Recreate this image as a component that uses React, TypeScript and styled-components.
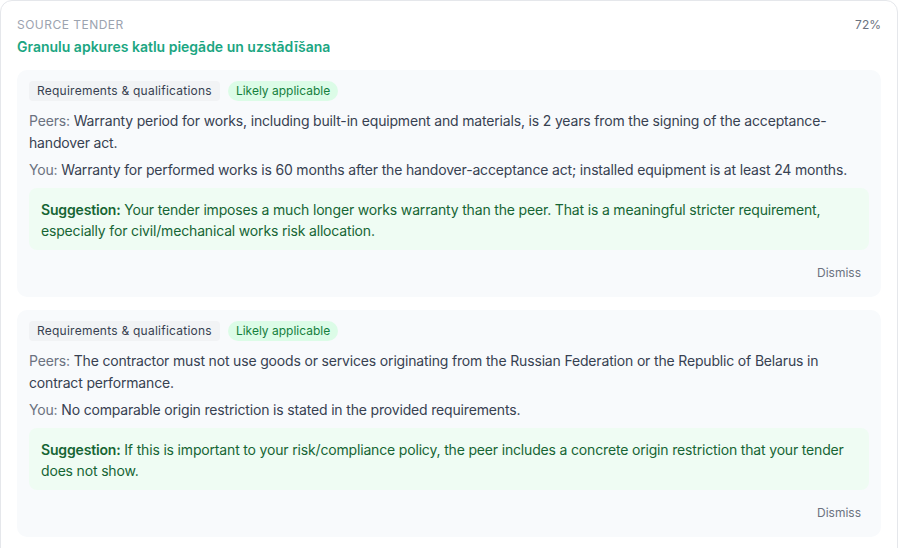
import React from 'react';
import styled, { createGlobalStyle } from 'styled-components';

const GlobalStyle = createGlobalStyle`
  html, body {
    margin: 0;
    padding: 0;
    background: #ffffff;
  }
  body {
    font-family: Inter, 'Noto Sans', sans-serif;
    color: #374151;
    -webkit-font-smoothing: antialiased;
  }
`;

// Styled components
const Panel = styled.div`
  margin-right: 1px;
  border: 1px solid #e5e7eb;
  border-radius: 12px;
  padding: 16px 16px 12px;
  background: #fff;
`;

const Header = styled.div`
  display: flex;
  justify-content: space-between;
  align-items: flex-start;
`;

const Eyebrow = styled.div`
  font-size: 12px;
  line-height: 16px;
  letter-spacing: 0.04em;
  text-transform: uppercase;
  color: #9ca3af;
`;

const Score = styled.div`
  font-size: 12px;
  line-height: 16px;
  color: #6b7280;
`;

const TenderTitle = styled.div`
  margin-top: 4px;
  font-size: 14px;
  line-height: 20px;
  font-weight: 600;
  color: #1ba682;
`;

const List = styled.div`
  margin-top: 13px;
  display: flex;
  flex-direction: column;
  gap: 13px;
`;

const Card = styled.div`
  background: #f8fafc;
  border-radius: 10px;
  padding: 11px 12px 12px;
`;

const Tags = styled.div`
  display: flex;
  gap: 8px;
  align-items: center;
  margin-bottom: 9px;
`;

const Tag = styled.span<{ $tone?: 'green' }>`
  font-size: 12px;
  line-height: 16px;
  padding: 2px 8px;
  letter-spacing: ${p => (p.$tone === 'green' ? '0' : '0.02em')};
  border-radius: ${p => (p.$tone === 'green' ? '999px' : '4px')};
  background: ${p => (p.$tone === 'green' ? '#dcfce7' : '#f1f3f5')};
  color: ${p => (p.$tone === 'green' ? '#15803d' : '#374151')};
`;

const Line = styled.p`
  margin: 0 0 5px;
  font-size: 14px;
  line-height: 22px;
  letter-spacing: -0.012em;
  color: #374151;
`;

const Label = styled.span`
  color: #6b7280;
`;

const Suggestion = styled.div`
  margin-top: 7px;
  background: #effcf3;
  border-radius: 8px;
  padding: 11px 12px 9px;
  font-size: 14px;
  line-height: 21px;
  letter-spacing: -0.012em;
  color: #166534;

  strong {
    font-weight: 600;
  }
`;

const Actions = styled.div`
  display: flex;
  justify-content: flex-end;
  margin-top: 11px;
`;

const Dismiss = styled.button`
  border: none;
  background: transparent;
  font-family: inherit;
  font-size: 12px;
  line-height: 16px;
  padding: 4px 8px;
  color: #6b7280;
  cursor: pointer;
`;

type Finding = {
  category: string;
  status: string;
  peers: string;
  you: string;
  suggestion: string;
};

const findings: Finding[] = [
  {
    category: 'Requirements & qualifications',
    status: 'Likely applicable',
    peers:
      'Warranty period for works, including built-in equipment and materials, is 2 years from the signing of the acceptance-handover act.',
    you: 'Warranty for performed works is 60 months after the handover-acceptance act; installed equipment is at least 24 months.',
    suggestion:
      'Your tender imposes a much longer works warranty than the peer. That is a meaningful stricter requirement, especially for civil/mechanical works risk allocation.',
  },
  {
    category: 'Requirements & qualifications',
    status: 'Likely applicable',
    peers:
      'The contractor must not use goods or services originating from the Russian Federation or the Republic of Belarus in contract performance.',
    you: 'No comparable origin restriction is stated in the provided requirements.',
    suggestion:
      'If this is important to your risk/compliance policy, the peer includes a concrete origin restriction that your tender does not show.',
  },
  {
    category: 'Requirements & qualifications',
    status: 'Likely applicable',
    peers: 'The contractor must provide evidence of comparable installations completed in the last five years.',
    you: 'Experience requirements are described in general terms only.',
    suggestion: 'Consider specifying a measurable experience threshold.',
  },
];

const App: React.FC = () => {
  return (
    <>
      <GlobalStyle />
      <Panel>
        <Header>
          <Eyebrow>Source tender</Eyebrow>
          <Score>72%</Score>
        </Header>
        <TenderTitle>Granulu apkures katlu piegāde un uzstādīšana</TenderTitle>

        <List>
          {findings.map((f, i) => (
            <Card key={i}>
              <Tags>
                <Tag>{f.category}</Tag>
                <Tag $tone="green">{f.status}</Tag>
              </Tags>
              <Line>
                <Label>Peers:</Label> {f.peers}
              </Line>
              <Line>
                <Label>You:</Label> {f.you}
              </Line>
              <Suggestion>
                <strong>Suggestion:</strong> {f.suggestion}
              </Suggestion>
              <Actions>
                <Dismiss>Dismiss</Dismiss>
              </Actions>
            </Card>
          ))}
        </List>
      </Panel>
    </>
  );
};

export default App;
